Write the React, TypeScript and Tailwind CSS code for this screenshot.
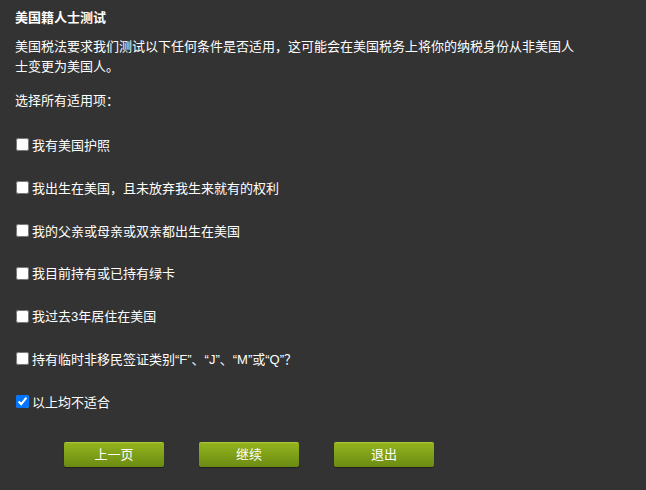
import React, { useState } from "react";

const options = [
  "我有美国护照",
  "我出生在美国，且未放弃我生来就有的权利",
  "我的父亲或母亲或双亲都出生在美国",
  "我目前持有或已持有绿卡",
  "我过去3年居住在美国",
  "持有临时非移民签证类别“F”、“J”、“M”或“Q”？",
  "以上均不适合",
];

function GreenButton({ label }: { label: string }) {
  return (
    <button
      type="button"
      className="w-[100px] h-[25px] rounded-[2px] border-t border-[#a9c83a] bg-gradient-to-b from-[#93b41d] to-[#6a8b12] text-[13px] leading-[24px] text-white shadow-[0_1px_1px_rgba(0,0,0,0.4)]"
    >
      {label}
    </button>
  );
}

export default function App() {
  const [checked, setChecked] = useState<boolean[]>(
    options.map((_, i) => i === options.length - 1)
  );

  return (
    <div
      className="w-[646px] h-[490px] bg-[#333333] text-white text-[13px] px-[15px] pt-[8px]"
      style={{ fontFamily: '"Liberation Sans", "Noto Sans CJK SC", sans-serif' }}
    >
      <h1 className="font-bold leading-[20px]">美国籍人士测试</h1>
      <p className="mt-[9px] w-[565px] leading-[20px]">
        美国税法要求我们测试以下任何条件是否适用，这可能会在美国税务上将你的纳税身份从非美国人士变更为美国人。
      </p>
      <p className="mt-[14px] leading-[20px]">选择所有适用项：</p>

      <div className="mt-[13.6px] flex flex-col">
        {options.map((label, i) => (
          <label key={label} className="h-[42.8px] flex items-center">
            <input
              type="checkbox"
              checked={checked[i]}
              onChange={() =>
                setChecked((prev) => prev.map((v, j) => (j === i ? !v : v)))
              }
              className="ml-[1px] mr-[3px] w-[13px] h-[13px] -translate-y-[1px]"
            />
            <span className="leading-[20px]">{label}</span>
          </label>
        ))}
      </div>

      <div className="mt-[17.6px] ml-[49px] flex gap-[35px]">
        <GreenButton label="上一页" />
        <GreenButton label="继续" />
        <GreenButton label="退出" />
      </div>
    </div>
  );
}
